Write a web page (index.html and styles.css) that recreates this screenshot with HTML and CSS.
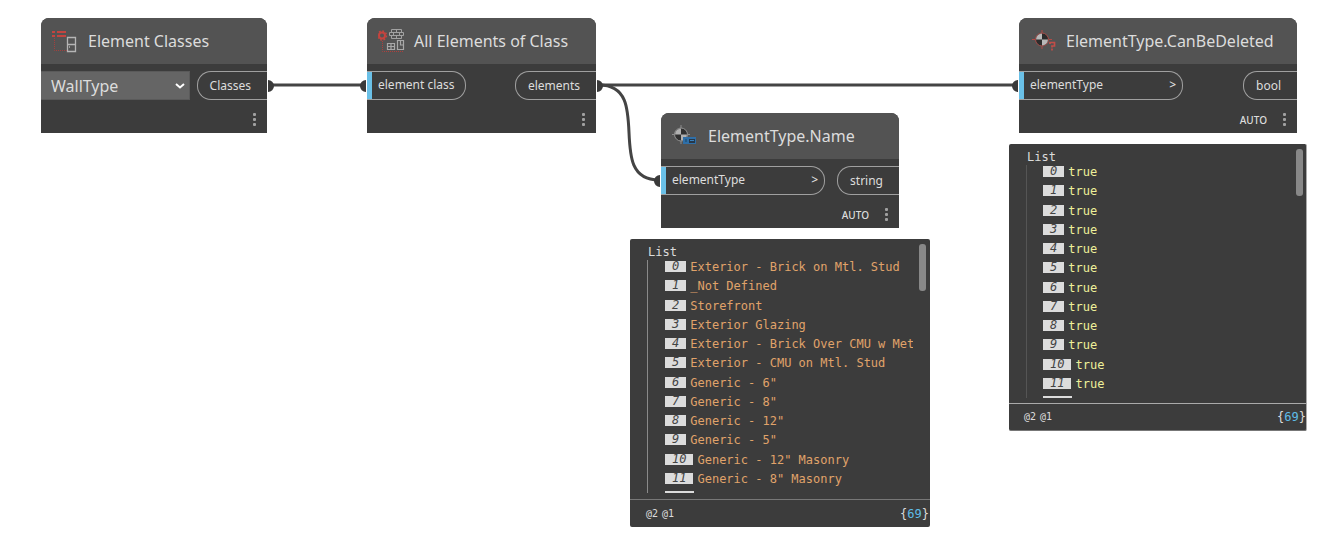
FILE: index.html
```
<!DOCTYPE html>
<html lang="en">
<head>
<meta charset="utf-8">
<title>Element type graph</title>
<link rel="stylesheet" href="styles.css">
</head>
<body>
<main class="canvas">
  <svg class="wires" width="1326" height="538" viewBox="0 0 1326 538" aria-hidden="true">
    <g fill="none" stroke="#444" stroke-width="3">
      <path d="M270 85H365"/>
      <path d="M599 85H1017"/>
      <path d="M599 85C655 85 603 180 659 180"/>
    </g>
    <g fill="#3a3a3a">
      <path d="M268 80a6 6 0 0 1 0 12zM366 80a6 6 0 0 0 0 12zM597 80a6 6 0 0 1 0 12zM1018 80a6 6 0 0 0 0 12zM660 175a6 6 0 0 0 0 12z"/>
    </g>
  </svg>

  <article class="node node-classes">
    <header class="node-head">
      <svg class="icon" width="28" height="26" viewBox="0 0 28 26" aria-hidden="true">
        <path d="M0 4h3M5 4h9M0 8h3M5 8h9" stroke="#c4443f" stroke-width="2"/>
        <path d="M2.500 10v12.500H15" fill="none" stroke="#a3403d" stroke-dasharray="1 1"/>
        <path d="M15.500 9.500h8v14h-8zM15.500 16.500h8" fill="none" stroke="#b5b5b5" stroke-width="1.300"/>
        <path d="M17.500 18v2" stroke="#999"/>
      </svg>
      <h2>Element Classes</h2>
    </header>
    <div class="ports">
      <div class="picker">
        <select aria-label="Element class"><option>WallType</option></select>
        <svg class="chevron" width="10" height="6" viewBox="0 0 10 6" aria-hidden="true"><path d="M1 1l4 3.500L9 1" fill="none" stroke="#fff" stroke-width="2"/></svg>
      </div>
      <span class="port out">Classes</span>
    </div>
    <footer class="node-foot"><button class="more" aria-label="Options"><i></i><i></i><i></i></button></footer>
  </article>

  <article class="node node-all">
    <header class="node-head">
      <svg class="icon" width="28" height="26" viewBox="0 0 28 26" aria-hidden="true">
        <circle cx="4" cy="7.500" r="3" fill="none" stroke="#c4443f" stroke-width="2"/>
        <circle cx="4" cy="7.500" r="4.500" fill="none" stroke="#c4443f" stroke-width="1.500" stroke-dasharray="1.800 1.700"/>
        <path d="M4.500 13v10.500H26" fill="none" stroke="#b03f3b" stroke-dasharray="1 1"/>
        <path d="M13.500 1.500h10v3h-10zM11.500 4.500h14v3h-14zM13.500 7.500h10v3h-10zM18.500 1.500v3M15.500 4.500v3M21.500 4.500v3M18.500 7.500v3" fill="none" stroke="#a2a2a2"/>
        <path d="M9.500 15.500h7v6h-7zM13 15.500v6M9.500 18.500h7M19.500 12.500h6v9h-6zM22.500 13v4h3" fill="none" stroke="#a8a8a8" stroke-width="1.200"/>
      </svg>
      <h2>All Elements of Class</h2>
    </header>
    <div class="ports">
      <span class="port in">element class</span>
      <span class="port out">elements</span>
    </div>
    <footer class="node-foot"><button class="more" aria-label="Options"><i></i><i></i><i></i></button></footer>
  </article>

  <article class="node node-name">
    <header class="node-head">
      <svg class="icon" width="28" height="26" viewBox="0 0 28 26" aria-hidden="true">
        <path d="M9 2v19M0 11.500h18" stroke="#8c8c8c"/>
        <circle cx="9" cy="11.500" r="6.500" fill="#303030" stroke="#929292"/>
        <path d="M9 11.500V5.500A6 6 0 0 0 3 11.500zM9 11.500V17.500a6 6 0 0 0 6-6z" fill="#b0b0b0"/>
        <path d="M11 14h13v7H11z" fill="#2f6fa8"/><path d="M13 16h2v3h-2z" fill="#245a85"/><path d="M17 16h6v4h-6z" fill="#26384a"/><path d="M18 17.500h4" stroke="#3b82bd"/>
      </svg>
      <h2>ElementType.Name</h2>
    </header>
    <div class="ports">
      <span class="port in wide">elementType <b>&gt;</b></span>
      <span class="port out">string</span>
    </div>
    <footer class="node-foot"><span>AUTO</span><button class="more" aria-label="Options"><i></i><i></i><i></i></button></footer>
  </article>

  <article class="node node-deleted">
    <header class="node-head">
      <svg class="icon" width="28" height="26" viewBox="0 0 28 26" aria-hidden="true">
        <path d="M12 2v19M2 11.500h20" stroke="#b14b47"/>
        <circle cx="12" cy="11.500" r="6.500" fill="#2c2c2c" stroke="#a64d49"/>
        <path d="M12 11.500V5.500A6 6 0 0 0 6 11.500zM12 11.500V17.500a6 6 0 0 0 6-6z" fill="#b8b8b8"/>
        <path d="M20 16v-1.500h4.500V18H22v1.500M22 20.500v2" fill="none" stroke="#c24d48" stroke-width="1.700"/>
      </svg>
      <h2>ElementType.CanBeDeleted</h2>
    </header>
    <div class="ports">
      <span class="port in wide">elementType <b>&gt;</b></span>
      <span class="port out">bool</span>
    </div>
    <footer class="node-foot"><span>AUTO</span><button class="more" aria-label="Options"><i></i><i></i><i></i></button></footer>
  </article>

  <section class="preview preview-names" aria-label="Names">
    <div class="preview-body">
      <h3>List</h3>
      <ol class="rows">
        <li><em>0</em>Exterior - Brick on Mtl. Stud</li>
        <li><em>1</em>_Not Defined</li>
        <li><em>2</em>Storefront</li>
        <li><em>3</em>Exterior Glazing</li>
        <li><em>4</em>Exterior - Brick Over CMU w Met</li>
        <li><em>5</em>Exterior - CMU on Mtl. Stud</li>
        <li><em>6</em>Generic - 6"</li>
        <li><em>7</em>Generic - 8"</li>
        <li><em>8</em>Generic - 12"</li>
        <li><em>9</em>Generic - 5"</li>
        <li><em>10</em>Generic - 12" Masonry</li>
        <li><em>11</em>Generic - 8" Masonry</li>
        <li class="cut"></li>
      </ol>
    </div>
    <footer class="preview-foot"><span>@2</span><span>@1</span><strong>{<b>69</b>}</strong></footer>
    <div class="thumb"></div>
  </section>

  <section class="preview preview-flags" aria-label="Can be deleted">
    <div class="preview-body">
      <h3>List</h3>
      <ol class="rows">
        <li><em>0</em>true</li>
        <li><em>1</em>true</li>
        <li><em>2</em>true</li>
        <li><em>3</em>true</li>
        <li><em>4</em>true</li>
        <li><em>5</em>true</li>
        <li><em>6</em>true</li>
        <li><em>7</em>true</li>
        <li><em>8</em>true</li>
        <li><em>9</em>true</li>
        <li><em>10</em>true</li>
        <li><em>11</em>true</li>
        <li class="cut"></li>
      </ol>
    </div>
    <footer class="preview-foot"><span>@2</span><span>@1</span><strong>{<b>69</b>}</strong></footer>
    <div class="thumb"></div>
  </section>
</main>
</body>
</html>
```
FILE: styles.css
```
* { box-sizing: border-box; }
body { margin: 0; background: #fff; font-family: "Noto Sans", "Open Sans", sans-serif; }
h2, h3, ol { margin: 0; padding: 0; font-weight: 400; }

.canvas { position: relative; min-height: 100vh; overflow: hidden; }
.wires { position: absolute; left: 0; top: 0; }

/* Graph nodes */
.node { position: absolute; color: #dcdcdc; background: #3c3c3c; border-radius: 8px 8px 0 0; }
.node-classes { left: 41px; top: 18px; width: 226px; }
.node-all { left: 367px; top: 18px; width: 229px; }
.node-name { left: 661px; top: 113px; width: 238px; }
.node-deleted { left: 1019px; top: 18px; width: 278px; }

.node-head { display: flex; align-items: center; gap: 8px; height: 46px; padding-left: 11px; background: #535353; border-radius: 8px 8px 0 0; }
.node-head h2 { font-size: 16px; line-height: 24px; white-space: nowrap; }
.icon { flex: none; }

.ports { display: flex; justify-content: space-between; gap: 7px; padding-top: 7px; }
.port { display: flex; align-items: center; justify-content: space-between; height: 29px; border: 1px solid #a0a0a0; font-size: 12px; line-height: 16px; white-space: nowrap; }
.port b { font-weight: 500; }
.in { padding: 0 10px 2px 11px; border-left: 0; border-radius: 0 14px 14px 0; background: linear-gradient(90deg, #6ac0e7 5px, transparent 5px) border-box; }
.wide { width: 164px; padding-right: 6px; }
.out { padding: 0 16px 0 12px; border-right: 0; border-radius: 14px 0 0 14px; }

.picker { position: relative; flex: 1; }
.picker select { appearance: none; width: 100%; height: 29px; padding: 0 10px; border: 1px solid #5a5a5a; border-left: 0; border-radius: 0; background: #656565; color: #dcdcdc; font: 16px "Noto Sans", "Open Sans", sans-serif; }
.chevron { position: absolute; right: 5px; top: 12px; pointer-events: none; }

.node-foot { display: flex; align-items: center; justify-content: flex-end; gap: 12px; height: 33px; padding: 6px 7px 0 0; font-size: 10px; font-weight: 500; line-height: 14px; }
.more { display: flex; flex-direction: column; align-items: center; gap: 2px; width: 11px; padding: 0; border: 0; background: none; }
.more i { width: 3px; height: 3px; border-radius: 1px; background: #a0a0a0; }

/* Value previews */
.preview { position: absolute; background: #3c3c3c; border-radius: 2px; color: #dcdcdc; font: 12px/16px "DejaVu Sans Mono", "Liberation Mono", monospace; }
.preview-names { left: 630px; top: 239px; width: 300px; }
.preview-flags { left: 1009px; top: 144px; width: 298px; border-right: 1px solid #aaa; border-bottom: 1px solid #777; }
.preview-body { padding: 5px 17px; }
.preview h3 { padding-left: 1px; font-size: 12px; }
.rows { display: grid; grid-template-rows: repeat(12, 1fr) 2px; height: 233px; padding-left: 17px; border-left: 1px solid #8a8a8a; list-style: none; color: #e0a36a; overflow: hidden; }
.rows li { display: flex; align-items: flex-start; gap: 4px; line-height: 15px; white-space: pre; }
.rows em { height: 11px; margin-top: 1px; padding: 0 7px; background: #dcdcdc; color: #444; line-height: 11px; }
.rows .cut { width: 29px; background: #dcdcdc; }
.preview-names .preview-body { padding-bottom: 6px; }
.preview-flags .rows { border-color: #555; color: #eef09a; padding-left: 16px; }
.preview-foot { display: flex; align-items: center; gap: 4px; height: 28px; padding: 0 1px 0 16px; border-top: 1px solid #777; font-size: 10px; }
.preview-flags .preview-foot { height: 27px; padding: 0 0 0 15px; border-color: #aaa; }
.preview-foot strong { margin-left: auto; font-size: 12px; font-weight: 400; }
.preview-foot b { font-weight: 400; color: #5fbde8; }
.thumb { position: absolute; right: 4px; top: 5px; width: 7px; height: 47px; border-radius: 3px; background: #888; }
.preview-flags .thumb { right: 3px; }
```
